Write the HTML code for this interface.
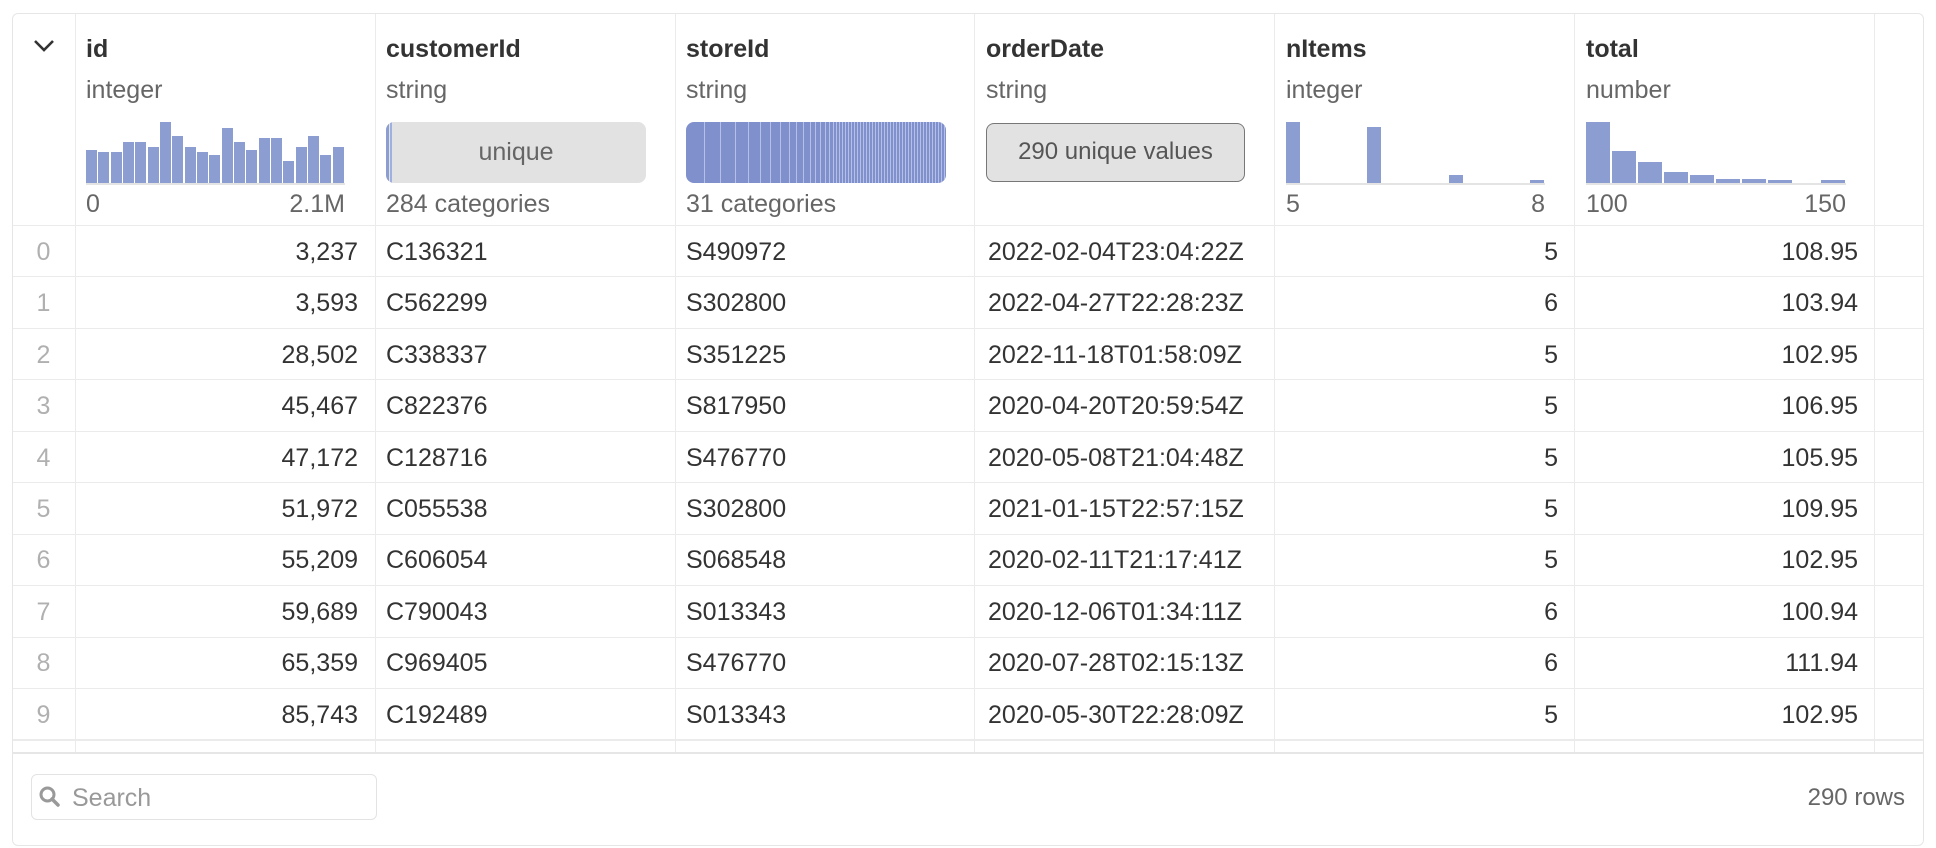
<!DOCTYPE html>
<html><head><meta charset="utf-8"><style>
*{box-sizing:border-box;margin:0;padding:0}
body{width:1936px;height:848px;background:#fff;font-family:"Liberation Sans",sans-serif;color:#333;position:relative;overflow:hidden}
.a{position:absolute;line-height:28px}
.tbl{left:12px;top:13px;width:1912px;height:833px;border:1px solid #e6e6e6;border-radius:6px;overflow:hidden}
.vl{position:absolute;top:0;width:1px;height:738px;background:#ebebeb}
.hl{position:absolute;left:0;width:1912px;height:1px;background:#ebebeb}
.nm{font-weight:bold;font-size:25px;color:#333;top:35px}
.ty{font-size:25px;color:#666;top:76px}
.lb{font-size:25px;color:#666;top:190px}
.c{position:absolute;font-size:25px;line-height:28px;color:#333;white-space:nowrap;overflow:hidden}
.r{text-align:right}
.rn{color:#b0b0b0;text-align:center;width:63px;left:0}
.bar{position:absolute;background:#8b9dd1}
</style></head><body>
<div class="a tbl">
<div class="vl" style="left:62px"></div>
<div class="vl" style="left:362px"></div>
<div class="vl" style="left:662px"></div>
<div class="vl" style="left:961px"></div>
<div class="vl" style="left:1261px"></div>
<div class="vl" style="left:1561px"></div>
<div class="vl" style="left:1861px"></div>
<div class="hl" style="top:211px"></div>
<div class="hl" style="top:262px"></div>
<div class="hl" style="top:314px"></div>
<div class="hl" style="top:365px"></div>
<div class="hl" style="top:417px"></div>
<div class="hl" style="top:468px"></div>
<div class="hl" style="top:520px"></div>
<div class="hl" style="top:571px"></div>
<div class="hl" style="top:623px"></div>
<div class="hl" style="top:674px"></div>
<div class="hl" style="top:725px;height:2px"></div>
<div class="hl" style="top:738px;height:2px;background:#e6e6e6"></div>
</div>
<svg class="a" style="left:32px;top:37px" width="24" height="18" viewBox="0 0 24 18"><path d="M3 4 L12 13 L21 4" fill="none" stroke="#333" stroke-width="2.6"/></svg>

<div class="a nm" style="left:86px">id</div>
<div class="a ty" style="left:86px">integer</div>
<div class="a nm" style="left:386px">customerId</div>
<div class="a ty" style="left:386px">string</div>
<div class="a nm" style="left:686px">storeId</div>
<div class="a ty" style="left:686px">string</div>
<div class="a nm" style="left:986px">orderDate</div>
<div class="a ty" style="left:986px">string</div>
<div class="a nm" style="left:1286px">nItems</div>
<div class="a ty" style="left:1286px">integer</div>
<div class="a nm" style="left:1586px">total</div>
<div class="a ty" style="left:1586px">number</div>

<div class="a" style="left:86px;top:183px;width:259px;height:2px;background:#e4e4e4"></div>
<div class="a" id="idh" style="left:86px;top:121px;width:259px;height:62px"></div>
<div class="a lb" style="left:86px">0</div>
<div class="a lb" style="left:265px;width:80px;text-align:right">2.1M</div>

<div class="a" style="left:386px;top:122px;width:260px;height:61px;background:#e2e2e2;border-radius:8px;overflow:hidden">
<div class="a" style="left:0;top:0;width:3px;height:61px;background:#8b9dd1"></div>
<div class="a" style="left:4px;top:0;width:2px;height:61px;background:#9fb0e0"></div>
<div class="a" style="left:0;top:16px;width:260px;text-align:center;font-size:25px;color:#666">unique</div>
</div>
<div class="a lb" style="left:386px">284 categories</div>

<div class="a" id="sth" style="left:686px;top:122px;width:260px;height:61px;background:#8090cc;border-radius:8px;overflow:hidden"></div>
<div class="a lb" style="left:686px">31 categories</div>

<div class="a" style="left:986px;top:123px;width:259px;height:59px;background:#e2e2e2;border:1.5px solid #777;border-radius:8px;font-size:24px;color:#555;text-align:center;line-height:55px">290 unique values</div>

<div class="a" style="left:1286px;top:183px;width:259px;height:2px;background:#e4e4e4"></div>
<div class="bar" style="left:1286px;top:122px;width:14px;height:61px"></div>
<div class="bar" style="left:1367px;top:127px;width:14px;height:56px"></div>
<div class="bar" style="left:1449px;top:175px;width:14px;height:8px"></div>
<div class="bar" style="left:1530px;top:180px;width:14px;height:3px"></div>
<div class="a lb" style="left:1286px">5</div>
<div class="a lb" style="left:1495px;width:50px;text-align:right">8</div>

<div class="a" style="left:1586px;top:183px;width:260px;height:2px;background:#e4e4e4"></div>
<div class="bar" style="left:1586px;top:122px;width:24px;height:61px"></div>
<div class="bar" style="left:1612px;top:151px;width:24px;height:32px"></div>
<div class="bar" style="left:1638px;top:162px;width:24px;height:21px"></div>
<div class="bar" style="left:1664px;top:172px;width:24px;height:11px"></div>
<div class="bar" style="left:1690px;top:175px;width:24px;height:8px"></div>
<div class="bar" style="left:1716px;top:179px;width:24px;height:4px"></div>
<div class="bar" style="left:1742px;top:179px;width:24px;height:4px"></div>
<div class="bar" style="left:1768px;top:180px;width:24px;height:3px"></div>
<div class="bar" style="left:1821px;top:180px;width:24px;height:3px"></div>
<div class="a lb" style="left:1586px">100</div>
<div class="a lb" style="left:1766px;width:80px;text-align:right">150</div>

<div id="rows"></div>

<div class="a" style="left:31px;top:774px;width:346px;height:46px;border:1px solid #e3e3e3;border-radius:6px"></div>
<svg class="a" style="left:38px;top:785px" width="24" height="24" viewBox="0 0 24 24"><circle cx="9.5" cy="9.5" r="6.5" fill="none" stroke="#999" stroke-width="3"/><path d="M14 14 L20 20" stroke="#999" stroke-width="3.5" stroke-linecap="round"/></svg>
<div class="a" style="left:72px;top:784px;font-size:25px;color:#999">Search</div>
<div class="a" style="left:1700px;top:784px;width:205px;text-align:right;font-size:24px;color:#666">290 rows</div>

<script>
var h=[33,31,31,41,41,36,61,47,36,31,28,55,41,33,45,45,22,36,47,28,36];
var s='';var w=259/21;
for(var i=0;i<h.length;i++){s+='<div class="bar" style="left:'+(i*w).toFixed(1)+'px;top:'+(62-h[i])+'px;width:'+(w-1.2).toFixed(1)+'px;height:'+h[i]+'px"></div>';}
document.getElementById('idh').innerHTML=s;
var st='';var x=0;var step=18;
while(x<258){x+=step;step=Math.max(3,step*0.9);if(x<258)st+='<div class="a" style="left:'+x.toFixed(1)+'px;top:0;width:1px;height:61px;background:#b4c0e6"></div>';}
document.getElementById('sth').innerHTML=st;
var d=[["3,237","C136321","S490972","2022-02-04T23:04:22Z","5","108.95"],
["3,593","C562299","S302800","2022-04-27T22:28:23Z","6","103.94"],
["28,502","C338337","S351225","2022-11-18T01:58:09Z","5","102.95"],
["45,467","C822376","S817950","2020-04-20T20:59:54Z","5","106.95"],
["47,172","C128716","S476770","2020-05-08T21:04:48Z","5","105.95"],
["51,972","C055538","S302800","2021-01-15T22:57:15Z","5","109.95"],
["55,209","C606054","S068548","2020-02-11T21:17:41Z","5","102.95"],
["59,689","C790043","S013343","2020-12-06T01:34:11Z","6","100.94"],
["65,359","C969405","S476770","2020-07-28T02:15:13Z","6","111.94"],
["85,743","C192489","S013343","2020-05-30T22:28:09Z","5","102.95"]];
var r='';
for(var i=0;i<10;i++){var t=238+i*51.4;var e=d[i];
r+='<div class="c rn" style="left:12px;top:'+t+'px">'+i+'</div>';
r+='<div class="c r" style="left:80px;width:278px;top:'+t+'px">'+e[0]+'</div>';
r+='<div class="c" style="left:386px;top:'+t+'px">'+e[1]+'</div>';
r+='<div class="c" style="left:686px;top:'+t+'px">'+e[2]+'</div>';
r+='<div class="c" style="left:988px;width:285px;top:'+t+'px">'+e[3]+'</div>';
r+='<div class="c r" style="left:1290px;width:268px;top:'+t+'px">'+e[4]+'</div>';
r+='<div class="c r" style="left:1590px;width:268px;top:'+t+'px">'+e[5]+'</div>';}
document.getElementById('rows').innerHTML=r;
</script>
</body></html>
